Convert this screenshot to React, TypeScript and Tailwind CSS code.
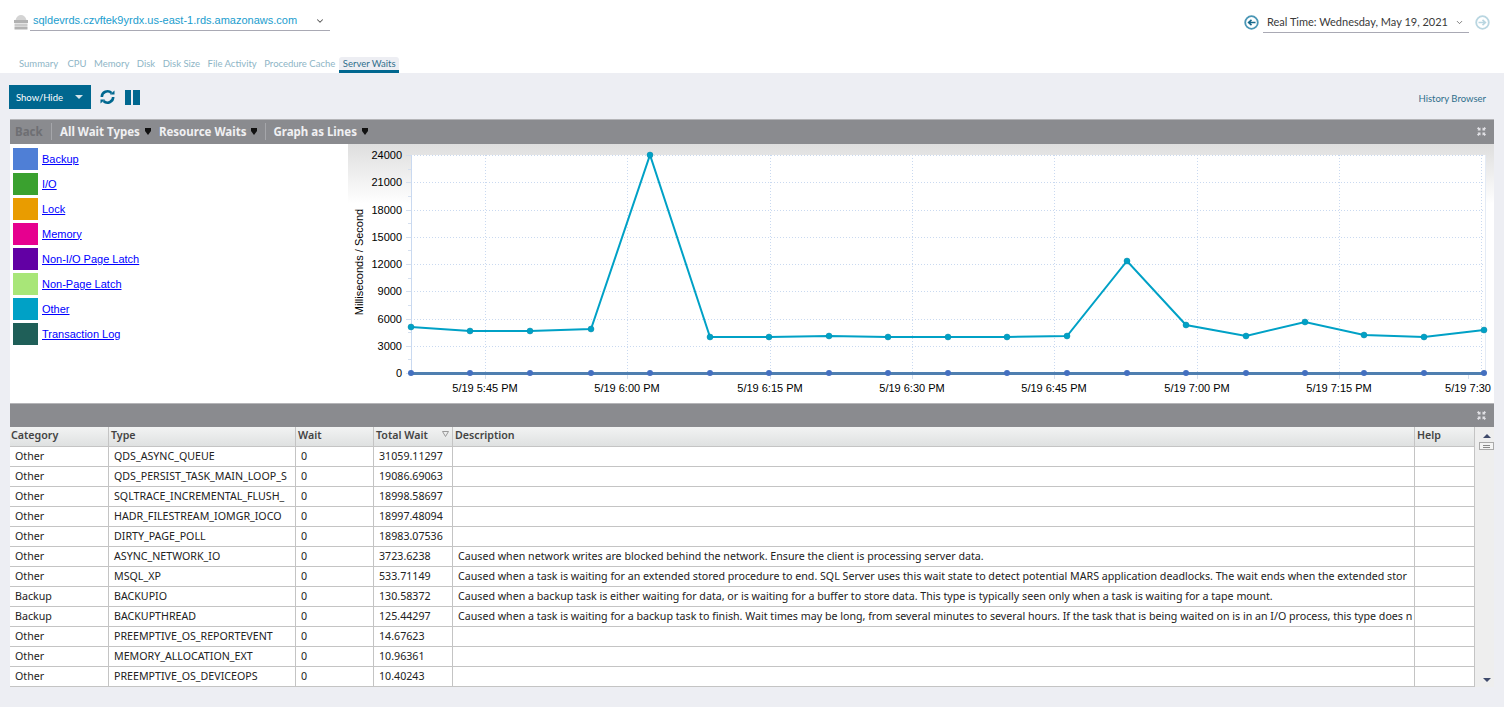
import React from "react";
import { ChevronDown } from "lucide-react";

const tabs = ["Summary", "CPU", "Memory", "Disk", "Disk Size", "File Activity", "Procedure Cache"];

const legend = [
	{ name: "Backup", color: "bg-[#4f7fd6]" },
	{ name: "I/O", color: "bg-[#3aa12f]" },
	{ name: "Lock", color: "bg-[#e99c00]" },
	{ name: "Memory", color: "bg-[#e6008f]" },
	{ name: "Non-I/O Page Latch", color: "bg-[#6200a4]" },
	{ name: "Non-Page Latch", color: "bg-[#a8e678]" },
	{ name: "Other", color: "bg-[#00a1c6]" },
	{ name: "Transaction Log", color: "bg-[#1f5f58]" },
];

const rows = [
	["Other", "QDS_ASYNC_QUEUE", "0", "31059.11297", ""],
	["Other", "QDS_PERSIST_TASK_MAIN_LOOP_S", "0", "19086.69063", ""],
	["Other", "SQLTRACE_INCREMENTAL_FLUSH_", "0", "18998.58697", ""],
	["Other", "HADR_FILESTREAM_IOMGR_IOCO", "0", "18997.48094", ""],
	["Other", "DIRTY_PAGE_POLL", "0", "18983.07536", ""],
	["Other", "ASYNC_NETWORK_IO", "0", "3723.6238", "Caused when network writes are blocked behind the network. Ensure the client is processing server data."],
	["Other", "MSQL_XP", "0", "533.71149", "Caused when a task is waiting for an extended stored procedure to end. SQL Server uses this wait state to detect potential MARS application deadlocks. The wait ends when the extended stor"],
	["Backup", "BACKUPIO", "0", "130.58372", "Caused when a backup task is either waiting for data, or is waiting for a buffer to store data. This type is typically seen only when a task is waiting for a tape mount."],
	["Backup", "BACKUPTHREAD", "0", "125.44297", "Caused when a task is waiting for a backup task to finish. Wait times may be long, from several minutes to several hours. If the task that is being waited on is in an I/O process, this type does n"],
	["Other", "PREEMPTIVE_OS_REPORTEVENT", "0", "14.67623", ""],
	["Other", "MEMORY_ALLOCATION_EXT", "0", "10.96361", ""],
	["Other", "PREEMPTIVE_OS_DEVICEOPS", "0", "10.40243", ""],
];

const xs = [63, 122, 182, 243, 302, 362, 421, 481, 540, 600, 659, 719, 779, 838, 898, 957, 1016, 1076, 1136];
const other = [183, 187, 187, 185, 11, 193, 193, 192, 193, 193, 193, 192, 117, 181, 192, 178, 191, 193, 186];
const yLabels = ["24000", "21000", "18000", "15000", "12000", "9000", "6000", "3000", "0"];
const xLabels = [
	["5/19 5:45 PM", 137],
	["5/19 6:00 PM", 279],
	["5/19 6:15 PM", 422],
	["5/19 6:30 PM", 564],
	["5/19 6:45 PM", 706],
	["5/19 7:00 PM", 849],
	["5/19 7:15 PM", 991],
	["5/19 7:30", 1120],
] as const;

function Chart() {
	return (
		<svg width="1146" height="259" className="block" style={{ fontFamily: "'Liberation Sans', sans-serif" }}>
			<defs>
				<linearGradient id="fade" x1="0" y1="0" x2="0" y2="1">
					<stop offset="0" stopColor="#dedede" />
					<stop offset="1" stopColor="#ffffff" />
				</linearGradient>
			</defs>
			<rect x="0" y="0" width="1146" height="60" fill="url(#fade)" />
			<rect x="63" y="11" width="1074" height="218" fill="#ffffff" />
			{[137, 279, 422, 564, 706, 849, 991, 1133].map((x) => (
				<line key={x} x1={x + 0.5} y1="11" x2={x + 0.5} y2="229" stroke="#c9d9f0" strokeDasharray="1 2" />
			))}
			{yLabels.map((l, i) => {
				const y = 11 + i * 27.25;
				return (
					<g key={l}>
						{i < 8 && <line x1="63" y1={Math.round(y) + 0.5} x2="1137" y2={Math.round(y) + 0.5} stroke="#c9d9f0" strokeDasharray="1 2" />}
						<line x1="58" y1={Math.round(y) + 0.5} x2="63" y2={Math.round(y) + 0.5} stroke="#d5dfee" />
						{i < 8 && <line x1="60" y1={Math.round(y + 13.6) + 0.5} x2="63" y2={Math.round(y + 13.6) + 0.5} stroke="#d5dfee" />}
						<text x="54" y={y + 4} textAnchor="end" fontSize="11" fill="#000">{l}</text>
					</g>
				);
			})}
			<line x1="63.5" y1="11" x2="63.5" y2="229" stroke="#c9d9f0" />
			<line x1="1137.5" y1="11" x2="1137.5" y2="229" stroke="#e4ebf5" />
			{xLabels.map(([l, x]) => (
				<g key={l}>
					<line x1={x + 0.5} y1="229" x2={x + 0.5} y2="235" stroke="#d5dfee" />
					<text x={x} y="248" textAnchor="middle" fontSize="11" fill="#000">{l}</text>
				</g>
			))}
			<text transform="translate(15 118) rotate(-90)" textAnchor="middle" fontSize="11" fill="#000">Milliseconds / Second</text>
			<polyline points={xs.map((x, i) => `${x},${other[i]}`).join(" ")} fill="none" stroke="#00a1c6" strokeWidth="2" />
			{xs.map((x, i) => (
				<circle key={x} cx={x} cy={other[i]} r="3" fill="#00a1c6" stroke="#0b8aa8" strokeWidth="0.5" />
			))}
			<line x1="63" y1="229.5" x2="1137" y2="229.5" stroke="#4f7fb0" strokeWidth="3" />
			{xs.map((x) => (
				<circle key={x} cx={x} cy="229" r="3" fill="#4470c0" />
			))}
		</svg>
	);
}

function CollapseIcon() {
	return (
		<svg width="9" height="9" viewBox="0 0 9 9" fill="#e2e2e6">
			<path d="M3.5 3.5H0.5L1.3 2.7L0 1.4L1.4 0L2.7 1.3L3.5 0.5Z" />
			<path d="M5.5 3.5H8.5L7.7 2.7L9 1.4L7.6 0L6.3 1.3L5.5 0.5Z" />
			<path d="M3.5 5.5H0.5L1.3 6.3L0 7.6L1.4 9L2.7 7.7L3.5 8.5Z" />
			<path d="M5.5 5.5H8.5L7.7 6.3L9 7.6L7.6 9L6.3 7.7L5.5 8.5Z" />
		</svg>
	);
}

function Menu({ label }: { label: string }) {
	return (
		<span className="flex items-center gap-[5px]">
			<span className="text-[11.5px] font-bold text-[#f0f0f2]">{label}</span>
			<svg width="6" height="7" viewBox="0 0 6 7">
				<path d="M0 0H6V3L3 7L0 3Z" fill="#111" />
			</svg>
		</span>
	);
}

function ArrowCircle({ dir, faded }: { dir: "left" | "right"; faded?: boolean }) {
	const ring = faded ? "#b9d6e1" : "#4a96b5";
	const arrow = faded ? "#b9d6e1" : "#17698c";
	return (
		<svg width="15" height="15" viewBox="0 0 15 15" fill="none">
			<circle cx="7.5" cy="7.5" r="6.3" strokeWidth="1.8" stroke={ring} />
			<path
				d={dir === "left" ? "M11.5 7.5H5M7.5 4.8L4.6 7.5L7.5 10.2" : "M3.5 7.5H10M7.5 4.8L10.4 7.5L7.5 10.2"}
				strokeWidth="1.6"
				stroke={arrow}
			/>
		</svg>
	);
}

const cellCols = "grid grid-cols-[99px_187px_78px_79px_962px_60px]";

export default function App() {
	return (
		<div className="w-[1504px] h-[707px] overflow-hidden flex flex-col bg-[#edeef3]" style={{ fontFamily: "'Noto Sans', sans-serif" }}>
			<div className="h-[73px] bg-white flex flex-col">
				<div className="h-[57px] flex justify-between items-start pl-[14px] pr-[14px] pt-[11px]">
					<div className="flex items-start">
						<svg width="14" height="15" viewBox="0 0 14 15" className="mt-[4px]">
							<path d="M1.5 5C2.5 1.5 4.5 0 7 0C9.5 0 11.5 1.5 12.5 5Z" fill="#d4d4d4" />
							<rect x="0" y="5" width="14" height="3" fill="#b2b2b2" />
							<rect x="0.5" y="8.5" width="13" height="2.5" fill="#cbcbcb" />
							<rect x="0.5" y="11.5" width="13" height="3" fill="#b2b2b2" />
						</svg>
						<div className="ml-[2px] w-[300px] h-[20px] border-b border-[#a9a9b4] flex items-center justify-between pl-[3px] pr-[5px]">
							<span className="text-[11px] font-['Liberation_Sans'] text-[#1b9dce]">sqldevrds.czvftek9yrdx.us-east-1.rds.amazonaws.com</span>
							<ChevronDown size={10} strokeWidth={2.5} className="text-[#555]" />
						</div>
					</div>
					<div className="flex items-center gap-[4px]">
						<ArrowCircle dir="left" />
						<div className="w-[206px] h-[22px] border-b border-[#a9a9b4] flex items-center justify-between pl-[4px] pr-[5px] pt-[1px] mr-[2px]">
							<span className="font-['Lato'] text-[11px] text-[#3a3a3a] whitespace-nowrap">Real Time: Wednesday, May 19, 2021</span>
							<ChevronDown size={9} strokeWidth={2} className="text-[#555]" />
						</div>
						<ArrowCircle dir="right" faded />
					</div>
				</div>
				<div className="h-[16px] flex items-end pl-[19px] font-['Lato']">
					<div className="flex gap-[7.5px] h-[16px] items-center pb-[1px] text-[9.5px] text-[#8eb5c6]">
						{tabs.map((t) => (
							<span key={t} className="first:w-[41px]">{t}</span>
						))}
					</div>
					<div className="ml-[4px] h-[16px] w-[60px] text-center bg-[#edeef3] rounded-t-[3px] border-b-[3px] border-[#00678f] text-[9.5px] leading-[13px] text-[#2f6f8c]">Server Waits</div>
				</div>
			</div>

			<div className="h-[46px] flex items-start justify-between pl-[9px] pr-[18px] pt-[12px] font-['Lato']">
				<div className="flex items-center gap-[9px]">
					<div className="w-[82px] h-[24px] bg-[#00678f] flex items-center justify-between pl-[7px] pr-[8px]">
						<span className="text-[9.5px] text-white pt-[2px]">Show/Hide</span>
						<span className="w-0 h-0 border-x-[4px] border-x-transparent border-t-[4px] border-t-[#d5e4ea]" />
					</div>
					<svg width="15" height="16" viewBox="0 0 15 16" fill="none" stroke="#00678f" strokeWidth="2.6">
						<path d="M1.8 8A5.7 5.7 0 0 1 11.5 4M13.2 8A5.7 5.7 0 0 1 3.5 12" />
						<path d="M10 5.5H14.5V1.5Z" fill="#00678f" stroke="none" />
						<path d="M5 10.5H0.5V14.5Z" fill="#00678f" stroke="none" />
					</svg>
					<div className="flex gap-[2px] ml-[1px]">
						<span className="w-[6px] h-[15px] bg-[#00678f]" />
						<span className="w-[7px] h-[15px] bg-[#00678f]" />
					</div>
				</div>
				<span className="text-[9.5px] text-[#2f6f8c] mt-[7px]">History Browser</span>
			</div>

			<div className="ml-[10px] w-[1484px] flex flex-col">
				<div className="h-[25px] bg-[#8a8b8f] border-t border-[#b5b5b8] flex items-center justify-between pr-[8px] pl-[5px] pb-[1px]">
					<div className="flex items-center">
						<span className="text-[11.5px] font-bold text-[#6e6f73] w-[37px] h-[17px] leading-[17px] border-r border-[#a5a6aa]">Back</span>
						<span className="ml-[8px] flex items-center gap-[8px]">
							<Menu label="All Wait Types" />
							<Menu label="Resource Waits" />
						</span>
						<span className="ml-[8px] pl-[7px] border-l border-[#a5a6aa] h-[17px] flex items-center">
							<Menu label="Graph as Lines" />
						</span>
					</div>
					<CollapseIcon />
				</div>
				<div className="h-[259px] bg-white flex">
					<div className="w-[338px] pl-[3px] pt-[4px] flex flex-col gap-[3px] font-['Liberation_Sans']">
						{legend.map((l) => (
							<div key={l.name} className="flex items-center gap-[4px] h-[22px]">
								<span className={`w-[25px] h-[22px] ${l.color}`} />
								<a className="text-[11px] text-[#0000ff] underline">{l.name}</a>
							</div>
						))}
					</div>
					<Chart />
				</div>
				<div className="h-[24px] bg-[#8a8b8f] border-t border-[#b5b5b8] flex items-center justify-end pr-[8px]">
					<CollapseIcon />
				</div>
				<div className="h-[260px] flex">
					<div className="w-[1465px] h-[260px] flex flex-col bg-white overflow-hidden text-[10.67px] text-[#222]">
						<div className={`${cellCols} h-[20px] shrink-0 bg-gradient-to-b from-[#f2f3f3] to-[#dfe1e1] border-b border-[#c4c4c4] font-semibold text-[#444]`}>
							{["Category", "Type", "Wait", "Total Wait", "Description", "Help"].map((h, i) => (
								<div key={h} className={`relative h-[19px] leading-[17px] border-r border-[#c4c4c4] ${i === 0 ? "pl-[1px]" : "pl-[2px]"}`}>
									{h}
									{h === "Total Wait" && (
										<svg width="7" height="6" viewBox="0 0 7 6" className="absolute right-[3px] top-[4px]" fill="none" stroke="#999">
											<path d="M0.5 0.5H6.5L3.5 5.5Z" />
										</svg>
									)}
								</div>
							))}
						</div>
						{rows.map((r) => (
							<div key={r[1]} className={`${cellCols} h-[20px] shrink-0 border-b border-[#c4c4c4]`}>
								{r.map((c, i) => (
									<div key={i} className="h-[19px] leading-[18px] border-r border-[#c4c4c4] whitespace-nowrap overflow-hidden pl-[5px]">
										{c}
									</div>
								))}
								<div className="h-[19px] border-r border-[#c4c4c4]" />
							</div>
						))}
					</div>
					<div className="w-[19px] h-[260px] bg-[#eeeeee] flex flex-col items-center pt-[7px] pl-[4px]">
						<span className="w-0 h-0 border-x-[4px] border-x-transparent border-b-[4px] border-b-[#3f4a6b]" />
						<span className="mt-[4px] w-[15px] h-[8px] bg-[#f4f4f4] border border-[#aaa] flex flex-col justify-center items-center gap-[1px]">
							<span className="w-[7px] h-px bg-[#888]" />
							<span className="w-[7px] h-px bg-[#888]" />
						</span>
						<span className="mt-auto mb-[5px] w-0 h-0 border-x-[4px] border-x-transparent border-t-[4px] border-t-[#3f4a6b]" />
					</div>
				</div>
			</div>
		</div>
	);
}
